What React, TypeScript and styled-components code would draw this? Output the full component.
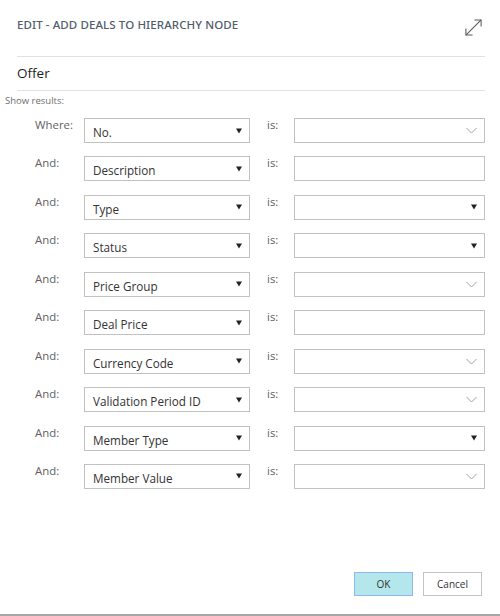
import React, { FC } from 'react'
import styled, { createGlobalStyle } from 'styled-components'

type ValueKind = 'lookup' | 'text' | 'option'

interface FilterRow {
	label: string
	field: string
	kind: ValueKind
}

const rows: FilterRow[] = [
	{ label: 'Where:', field: 'No.', kind: 'lookup' },
	{ label: 'And:', field: 'Description', kind: 'text' },
	{ label: 'And:', field: 'Type', kind: 'option' },
	{ label: 'And:', field: 'Status', kind: 'option' },
	{ label: 'And:', field: 'Price Group', kind: 'lookup' },
	{ label: 'And:', field: 'Deal Price', kind: 'text' },
	{ label: 'And:', field: 'Currency Code', kind: 'lookup' },
	{ label: 'And:', field: 'Validation Period ID', kind: 'lookup' },
	{ label: 'And:', field: 'Member Type', kind: 'option' },
	{ label: 'And:', field: 'Member Value', kind: 'lookup' },
]

const Triangle: FC = () => (
	<svg width="6" height="6" viewBox="0 0 6 6">
		<path d="M0 0.5 H6 L3 5.5 Z" fill="#222" />
	</svg>
)

const Chevron: FC = () => (
	<svg width="11" height="7" viewBox="0 0 11 7">
		<path d="M0.5 1 L5.5 6 L10.5 1" fill="none" stroke="#a0a0a0" strokeWidth="1" />
	</svg>
)

const ExpandIcon: FC = () => (
	<svg width="19" height="19" viewBox="0 0 20 20">
		<g fill="none" stroke="#5a5a5a" strokeWidth="1.1">
			<path d="M2 18 L18 2" />
			<path d="M11 2 H18 V9" />
			<path d="M2 11 V18 H9" />
		</g>
	</svg>
)

const App: FC = () => {
	return (
		<>
			<GlobalStyle />
			<Page>
				<Header>
					<Title>EDIT - ADD DEALS TO HIERARCHY NODE</Title>
					<ExpandButton title="Expand">
						<ExpandIcon />
					</ExpandButton>
				</Header>
				<SectionHeading>Offer</SectionHeading>
				<ShowResults>Show results:</ShowResults>
				<FilterGrid>
					{rows.map((row) => (
						<React.Fragment key={row.field}>
							<RowLabel>{row.label}</RowLabel>
							<Field>
								<FieldText>{row.field}</FieldText>
								<Triangle />
							</Field>
							<IsLabel>is:</IsLabel>
							<Field>
								<FieldText />
								{row.kind === 'lookup' && <Chevron />}
								{row.kind === 'option' && <Triangle />}
							</Field>
						</React.Fragment>
					))}
				</FilterGrid>
				<Footer>
					<Button primary>OK</Button>
					<Button>Cancel</Button>
				</Footer>
			</Page>
		</>
	)
}

export default App

const GlobalStyle = createGlobalStyle`
	html, body {
		margin: 0;
		padding: 0;
		background: #fff;
	}
	body {
		font-family: "Open Sans", "Noto Sans", sans-serif;
	}
`

const Page = styled.div`
	width: 500px;
	height: 616px;
	box-sizing: border-box;
	display: flex;
	flex-direction: column;
	background: #fff;
	border-bottom: 2px solid #a6a6a6;
`

const Header = styled.div`
	height: 57px;
	margin: 0 15px 0 17px;
	box-sizing: border-box;
	display: flex;
	align-items: center;
	justify-content: space-between;
	border-bottom: 1px solid #e1e1e1;
	padding-bottom: 7px;
`

const Title = styled.div`
	font-family: "Noto Sans", "Open Sans", sans-serif;
	font-size: 11.5px;
	letter-spacing: 0.1px;
	color: #505c6d;
	font-weight: 500;
`

const ExpandButton = styled.div`
	display: flex;
	margin-right: 2px;
	margin-top: 6px;
`

const SectionHeading = styled.div`
	height: 34px;
	margin: 0 15px 0 17px;
	box-sizing: border-box;
	display: flex;
	align-items: center;
	border-bottom: 1px solid #e1e1e1;
	font-size: 13.5px;
	color: #1e1e1e;
	padding-bottom: 1px;
`

const ShowResults = styled.div`
	margin: 3px 0 0 5px;
	font-size: 9.5px;
	color: #6e6e6e;
	line-height: 14px;
`

const FilterGrid = styled.div`
	display: grid;
	grid-template-columns: 49px 166px 44px 191px;
	grid-auto-rows: 25px;
	row-gap: 13.45px;
	padding-left: 35px;
	margin-top: 10px;
`

const RowLabel = styled.div`
	font-size: 11.4px;
	color: #5f5f5f;
	line-height: 14px;
	padding-top: 0;
`

const IsLabel = styled(RowLabel)`
	padding-left: 17px;
`

const Field = styled.div`
	box-sizing: border-box;
	border: 1px solid #c1c1c1;
	display: flex;
	align-items: center;
	justify-content: space-between;
	padding: 0 7px 0 8px;
	background: #fff;
`

const FieldText = styled.span`
	font-size: 11.7px;
	color: #333;
	padding-top: 3px;
`

const Footer = styled.div`
	margin-top: auto;
	display: flex;
	justify-content: flex-end;
	gap: 10px;
	padding: 0 18px 18px 0;
`

const Button = styled.button<{ primary?: boolean }>`
	width: 59px;
	height: 24px;
	box-sizing: border-box;
	font-family: "Open Sans", "Noto Sans", sans-serif;
	font-size: 10px;
	color: #333;
	background: ${(p) => (p.primary ? '#b4e7eb' : '#fff')};
	border: 1px solid ${(p) => (p.primary ? '#8fb8ec' : '#c4c4c4')};
	padding: 0;
	cursor: pointer;
`
